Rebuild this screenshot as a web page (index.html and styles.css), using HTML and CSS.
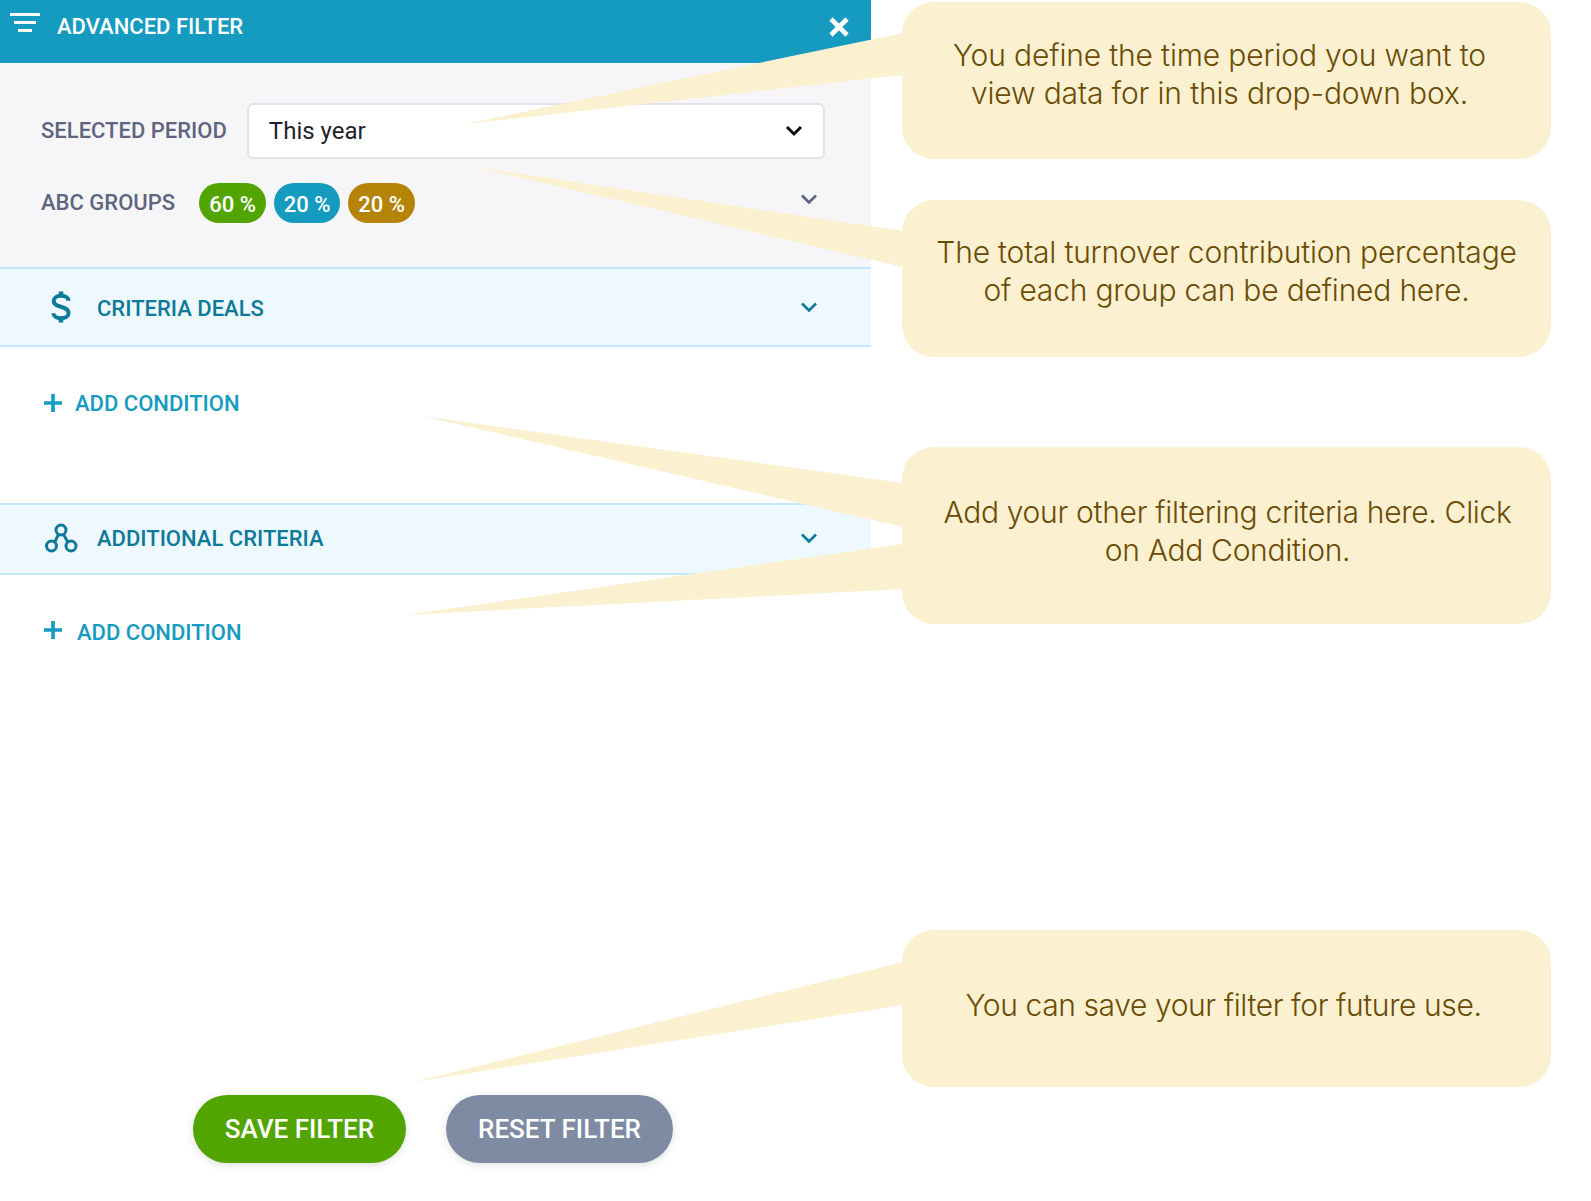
FILE: index.html
```html
<!DOCTYPE html>
<html lang="en">
<head>
<meta charset="utf-8">
<title>Advanced Filter</title>
<link rel="stylesheet" href="styles.css">
</head>
<body>
<div class="page">
  <main class="panel">
    <header class="panel-head">
      <svg class="filter-icon" width="30" height="20" viewBox="0 0 30 20"><path d="M0 0h30v3H0zM4 8h22v3H4zM8 16h14v3H8z" fill="#fff"/></svg>
      <h1 class="panel-title">ADVANCED FILTER</h1>
      <svg class="close-icon" width="20" height="20" viewBox="0 0 20 20"><path d="M2 2l16 16M18 2L2 18" stroke="#fff" stroke-width="4.6" fill="none"/></svg>
    </header>
    <section class="settings">
      <div class="period-row">
        <span class="label period-label">SELECTED PERIOD</span>
        <div class="select">
          <span class="select-value">This year</span>
          <svg class="chev-black" width="18" height="12" viewBox="0 0 18 12"><path d="M2 2l7 7 7-7" stroke="#111" stroke-width="3" fill="none"/></svg>
        </div>
      </div>
      <div class="groups-row">
        <span class="label groups-label">ABC GROUPS</span>
        <span class="pill pill-green">60 %</span>
        <span class="pill pill-blue">20 %</span>
        <span class="pill pill-gold">20 %</span>
        <svg class="chev chev-grey" width="16" height="10" viewBox="0 0 16 10"><path d="M1 1.500l7 7 7-7" stroke="#5f6580" stroke-width="2.600" fill="none"/></svg>
      </div>
    </section>
    <section class="criteria criteria-deals">
      <svg class="crit-icon" width="24" height="32" viewBox="0 0 24 32"><path d="M19.500 9.800C19.500 6.800 16.500 4.800 12 4.800 7.500 4.800 4.700 7 4.700 10 4.700 13.500 7.800 14.700 12 15.800 16.500 17 19.600 18.300 19.600 22 19.600 25.200 16.500 27.200 12 27.200 7.500 27.200 4.400 25.200 4.400 22.300" stroke="#0e7a9a" stroke-width="4" fill="none"/><path d="M12 .5v31" stroke="#0e7a9a" stroke-width="4.600" stroke-dasharray="5 21 5" fill="none"/></svg>
      <h2 class="crit-title">CRITERIA DEALS</h2>
      <svg class="chev" width="16" height="10" viewBox="0 0 16 10"><path d="M1 1.500l7 7 7-7" stroke="#0e7a9a" stroke-width="2.600" fill="none"/></svg>
    </section>
    <div class="add add-first">
      <svg width="18" height="18" viewBox="0 0 18 18"><path d="M9 0v18M0 9h18" stroke="#159ac0" stroke-width="3.600"/></svg>
      <span class="add-text">ADD CONDITION</span>
    </div>
    <section class="criteria criteria-extra">
      <svg class="crit-icon" width="34" height="30" viewBox="0 0 34 30"><g fill="none" stroke="#0e7a9a" stroke-width="3"><circle cx="17" cy="7" r="5"/><circle cx="7.500" cy="23" r="5"/><circle cx="27" cy="23" r="5"/><path d="M14.500 11.500l-3.500 7M19.500 11.500l4 7"/></g></svg>
      <h2 class="crit-title">ADDITIONAL CRITERIA</h2>
      <svg class="chev" width="16" height="10" viewBox="0 0 16 10"><path d="M1 1.500l7 7 7-7" stroke="#0e7a9a" stroke-width="2.600" fill="none"/></svg>
    </section>
    <div class="add add-second">
      <svg width="18" height="18" viewBox="0 0 18 18"><path d="M9 0v18M0 9h18" stroke="#159ac0" stroke-width="3.600"/></svg>
      <span class="add-text">ADD CONDITION</span>
    </div>
    <footer class="actions">
      <button class="btn btn-save">SAVE FILTER</button>
      <button class="btn btn-reset">RESET FILTER</button>
    </footer>
  </main>

  <svg class="tails" width="1591" height="1201" viewBox="0 0 1591 1201">
    <path d="M465 124L903 33V75Z"/>
    <path d="M475 167L903 231V267Z"/>
    <path d="M422 416L903 483V527Z"/>
    <path d="M405 615L903 544V589Z"/>
    <path d="M413 1082L903 962V1005Z"/>
  </svg>

  <aside class="note note-a"><p>You define the time period you want to<br>view data for in this drop-down box.</p></aside>
  <aside class="note note-b"><p>The total turnover contribution percentage<br>of each group can be defined here.</p></aside>
  <aside class="note note-c"><p>Add your other filtering criteria here. Click<br>on Add Condition.</p></aside>
  <aside class="note note-d"><p>You can save your filter for future use.</p></aside>
</div>
</body>
</html>
```
FILE: styles.css
```css
* { box-sizing: border-box; }
html, body { margin: 0; height: 100%; background: #fff; }
body { font-family: Roboto, "Liberation Sans", sans-serif; overflow: hidden; }
.page { position: relative; width: 1591px; height: 1201px; }

.panel { width: 871px; height: 1201px; display: flex; flex-direction: column; }
.panel-head {
  height: 63px; background: #159ac0; color: #fff;
  display: flex; align-items: flex-start; padding: 13px 22px 0 10px;
}
.filter-icon { flex: none; }
.panel-title { margin: 1px 0 0 17px; font-size: 22px; font-weight: 500; line-height: 26px; flex: 1; }
.close-icon { margin-top: 4px; }

.settings { height: 204px; background: #f6f6f9; padding: 40px 46px 0 41px; }
.period-row { display: flex; align-items: center; }
.label { font-size: 22px; font-weight: 500; color: #5f6580; }
.period-label { margin-bottom: 2px; }
.select {
  margin-left: 20px; flex: 1; height: 56px; background: #fff;
  border: 2px solid #e1e3ea; border-radius: 6px;
  display: flex; align-items: center; justify-content: space-between;
  padding: 0 20px; font-size: 24px; color: #20222b;
}
.select-value { margin-bottom: 0; }
.groups-row { display: flex; align-items: center; gap: 8px; margin-top: 24px; position: relative; }
.groups-label { width: 150px; margin-bottom: 2px; }
.pill {
  width: 67px; height: 40px; border-radius: 20px; color: #fff; padding-top: 2px;
  font-size: 22px; font-weight: 500; display: flex; align-items: center; justify-content: center;
}
.pill-green { background: #52a500; }
.pill-blue { background: #159ac0; width: 66px; }
.pill-gold { background: #b58306; }
.chev { margin-left: auto; flex: none; }
.chev-grey { margin-right: 8px; margin-bottom: 8px; }

.criteria {
  display: flex; align-items: center; background: #edf9fe;
  border-top: 2px solid #c4e8fb; border-bottom: 2px solid #c4e8fb;
  padding-right: 54px; color: #0e7a9a;
}
.criteria-deals { height: 80px; padding-left: 49px; }
.criteria-extra { height: 72px; padding-left: 44px; padding-bottom: 2px; }
.crit-title { margin: 0; font-size: 22px; font-weight: 500; }
.criteria-deals .crit-title { margin: 2px 0 0 24px; }
.criteria-extra .crit-title { margin-left: 19px; }

.add { display: flex; align-items: center; padding-left: 44px; color: #159ac0; font-size: 22px; font-weight: 500; }
.add-first { height: 156px; padding-bottom: 44px; gap: 13px; }
.add-second { padding-top: 45px; gap: 15px; }
.add-second svg { margin-bottom: 6px; }

.actions { margin-top: auto; display: flex; gap: 40px; padding: 0 0 38px 193px; }
.btn {
  height: 68px; border: 0; border-radius: 34px; color: #fff;
  font-family: inherit; font-size: 26px; font-weight: 500;
  box-shadow: 0 2px 8px rgba(0, 0, 0, .12);
}
.btn-save { width: 213px; background: #52a500; }
.btn-reset { width: 227px; background: #7f8aa3; }

.tails { position: absolute; left: 0; top: 0; pointer-events: none; }
.tails path { fill: #fbf0cf; }

.note {
  position: absolute; left: 902px; width: 649px;
  background: #fbf0cf; border-radius: 32px; color: #6a4c05;
  font-family: Inter, "Liberation Sans", Arial, sans-serif; font-weight: 300; font-size: 30px; line-height: 38px;
  letter-spacing: -.2px; text-align: center;
}
.note p { margin: 0; }
.note-a { top: 2px; height: 157px; padding: 34px 14px 0 0; letter-spacing: -.15px; }
.note-b { top: 200px; height: 157px; padding: 33px 0 0 0; }
.note-c { top: 447px; height: 177px; padding: 46px 0 0 2px; letter-spacing: -.3px; }
.note-d { top: 930px; height: 157px; padding: 56px 6px 0 0; letter-spacing: -.4px; }
```
